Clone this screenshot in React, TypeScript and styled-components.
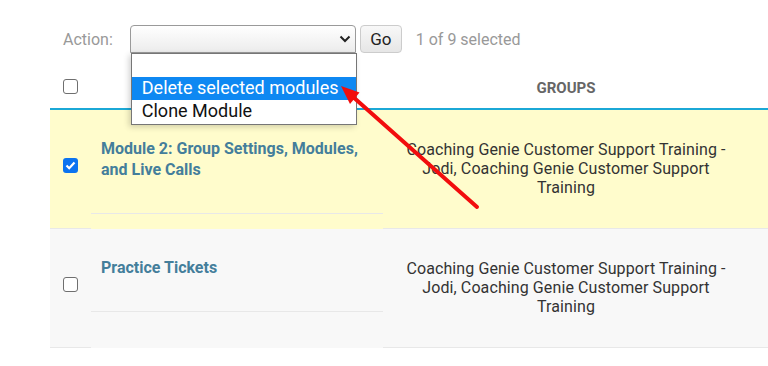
import React from "react";
import styled, { createGlobalStyle } from "styled-components";

const GlobalStyle = createGlobalStyle`
  html, body {
    margin: 0;
    padding: 0;
    background: #fff;
    font-family: Roboto, "Liberation Sans", Arial, sans-serif;
  }
`;

const Page = styled.div`
  position: relative;
  width: 768px;
  height: 366px;
  overflow: hidden;
  padding: 25px 0 0 50px;
  box-sizing: border-box;
`;

const Toolbar = styled.div`
  display: flex;
  align-items: center;
  height: 28px;
  padding-left: 13px;
`;

const Label = styled.span`
  font-size: 16px;
  color: #999;
  margin-right: 17px;
`;

const SelectWrap = styled.div`
  position: relative;
  width: 226px;
  height: 28px;
`;

const SelectBox = styled.div`
  box-sizing: border-box;
  height: 28px;
  border: 1px solid #9a9a9a;
  border-radius: 4px 4px 0 0;
  background: linear-gradient(#ffffff, #ececec);
  display: flex;
  align-items: center;
  justify-content: flex-end;
  padding-right: 4px;
`;

const Menu = styled.ul`
  position: absolute;
  top: 28px;
  left: 1px;
  width: 226px;
  box-sizing: border-box;
  margin: 0;
  padding: 0 0 1px;
  list-style: none;
  background: #fff;
  border: 1px solid #767676;
  box-shadow: -2px 2px 6px rgba(0, 0, 0, 0.18);
  z-index: 2;
`;

const Option = styled.li<{ $active?: boolean }>`
  height: 23px;
  line-height: 22px;
  padding-left: 10px;
  font-size: 18px;
  color: ${(p) => (p.$active ? "#fff" : "#111")};
  background: ${(p) => (p.$active ? "#0e88f2" : "transparent")};
`;

const GoButton = styled.div`
  box-sizing: border-box;
  width: 42px;
  height: 28px;
  margin-left: 4px;
  border: 1px solid #ccc;
  border-radius: 4px;
  background: linear-gradient(#f8f8f8, #e6e6e6);
  font-size: 17px;
  color: #222;
  display: flex;
  align-items: center;
  justify-content: center;
`;

const Counter = styled.span`
  margin-left: 14px;
  font-size: 16px;
  color: #999;
`;

const Table = styled.div`
  margin-top: 12px;
`;

const Row = styled.div<{ $bg: string; $head?: boolean }>`
  display: grid;
  grid-template-columns: 41px 292px 366px 1fr;
  height: ${(p) => (p.$head ? "43px" : "119px")};
  background: ${(p) => p.$bg};
  border-bottom: ${(p) => (p.$head ? "2px solid #1ba8d6" : "none")};
`;

const CheckCell = styled.div<{ $line?: boolean }>`
  display: flex;
  align-items: center;
  padding-left: 13px;
  padding-bottom: ${(p) => (p.$line ? "8px" : "0")};
  box-sizing: border-box;
  border-bottom: ${(p) => (p.$line ? "1px solid #e8e8e8" : "none")};
`;

const Box = styled.span<{ $checked?: boolean }>`
  box-sizing: border-box;
  width: 15px;
  height: 15px;
  border-radius: 3px;
  border: ${(p) => (p.$checked ? "none" : "1px solid #6f6f6f")};
  background: ${(p) => (p.$checked ? "#0b73f0" : "#fff")};
  display: flex;
  align-items: center;
  justify-content: center;
`;

const TitleCell = styled.div`
  display: flex;
  flex-direction: column;
`;

const TitleInner = styled.div`
  padding: 28px 10px 33px;
  border-bottom: 1px solid #e8e8e8;
`;

const TitleLink = styled.a`
  font-size: 16px;
  font-weight: 700;
  line-height: 21px;
  color: #447e9b;
  text-decoration: none;
`;

const HeadCell = styled.div`
  display: flex;
  align-items: center;
  justify-content: center;
  font-size: 15px;
  font-weight: 700;
  color: #666;
  padding-top: 2px;
`;

const GroupCell = styled.div<{ $line?: boolean }>`
  display: flex;
  align-items: center;
  justify-content: center;
  text-align: center;
  padding: 0 11px 2px;
  font-size: 16px;
  letter-spacing: 0.1px;
  line-height: 19px;
  color: #333;
  border-bottom: ${(p) => (p.$line ? "1px solid #e8e8e8" : "none")};
`;

const Arrow = styled.svg`
  position: absolute;
  left: 0;
  top: 0;
  pointer-events: none;
  z-index: 3;
`;

const Chevron = () => (
  <svg width="12" height="8" viewBox="0 0 12 8">
    <polyline points="1.5,1.5 6,6 10.5,1.5" fill="none" stroke="#222" strokeWidth="2" />
  </svg>
);

const Tick = () => (
  <svg width="11" height="9" viewBox="0 0 11 9">
    <polyline points="1.5,4.5 4.2,7.2 9.5,1.5" fill="none" stroke="#fff" strokeWidth="2.2" />
  </svg>
);

const groups = "Coaching Genie Customer Support Training - Jodi, Coaching Genie Customer Support Training";

const modules = [
  { title: "Module 2: Group Settings, Modules, and Live Calls", checked: true, bg: "#fffccc" },
  { title: "Practice Tickets", checked: false, bg: "#f8f8f8" },
];

export default function App() {
  return (
    <>
      <GlobalStyle />
      <Page>
        <Toolbar>
          <Label>Action:</Label>
          <SelectWrap>
            <SelectBox>
              <Chevron />
            </SelectBox>
            <Menu>
              <Option>&nbsp;</Option>
              <Option $active>Delete selected modules</Option>
              <Option>Clone Module</Option>
            </Menu>
          </SelectWrap>
          <GoButton>Go</GoButton>
          <Counter>1 of 9 selected</Counter>
        </Toolbar>
        <Table>
          <Row $bg="#fff" $head>
            <CheckCell>
              <Box />
            </CheckCell>
            <div />
            <HeadCell>GROUPS</HeadCell>
            <div />
          </Row>
          {modules.map((m) => (
            <Row key={m.title} $bg={m.bg}>
              <CheckCell $line>
                <Box $checked={m.checked}>{m.checked && <Tick />}</Box>
              </CheckCell>
              <TitleCell>
                <TitleInner>
                  <TitleLink href="#">{m.title}</TitleLink>
                </TitleInner>
              </TitleCell>
              <GroupCell $line>{groups}</GroupCell>
              <GroupCell $line />
            </Row>
          ))}
        </Table>
        <Arrow width="768" height="366">
          <line x1="477" y1="207" x2="352" y2="96" stroke="#f20d0d" strokeWidth="4" strokeLinecap="round" />
          <polygon points="341,86 359.5,92.5 350,104" fill="#f20d0d" />
        </Arrow>
      </Page>
    </>
  );
}
